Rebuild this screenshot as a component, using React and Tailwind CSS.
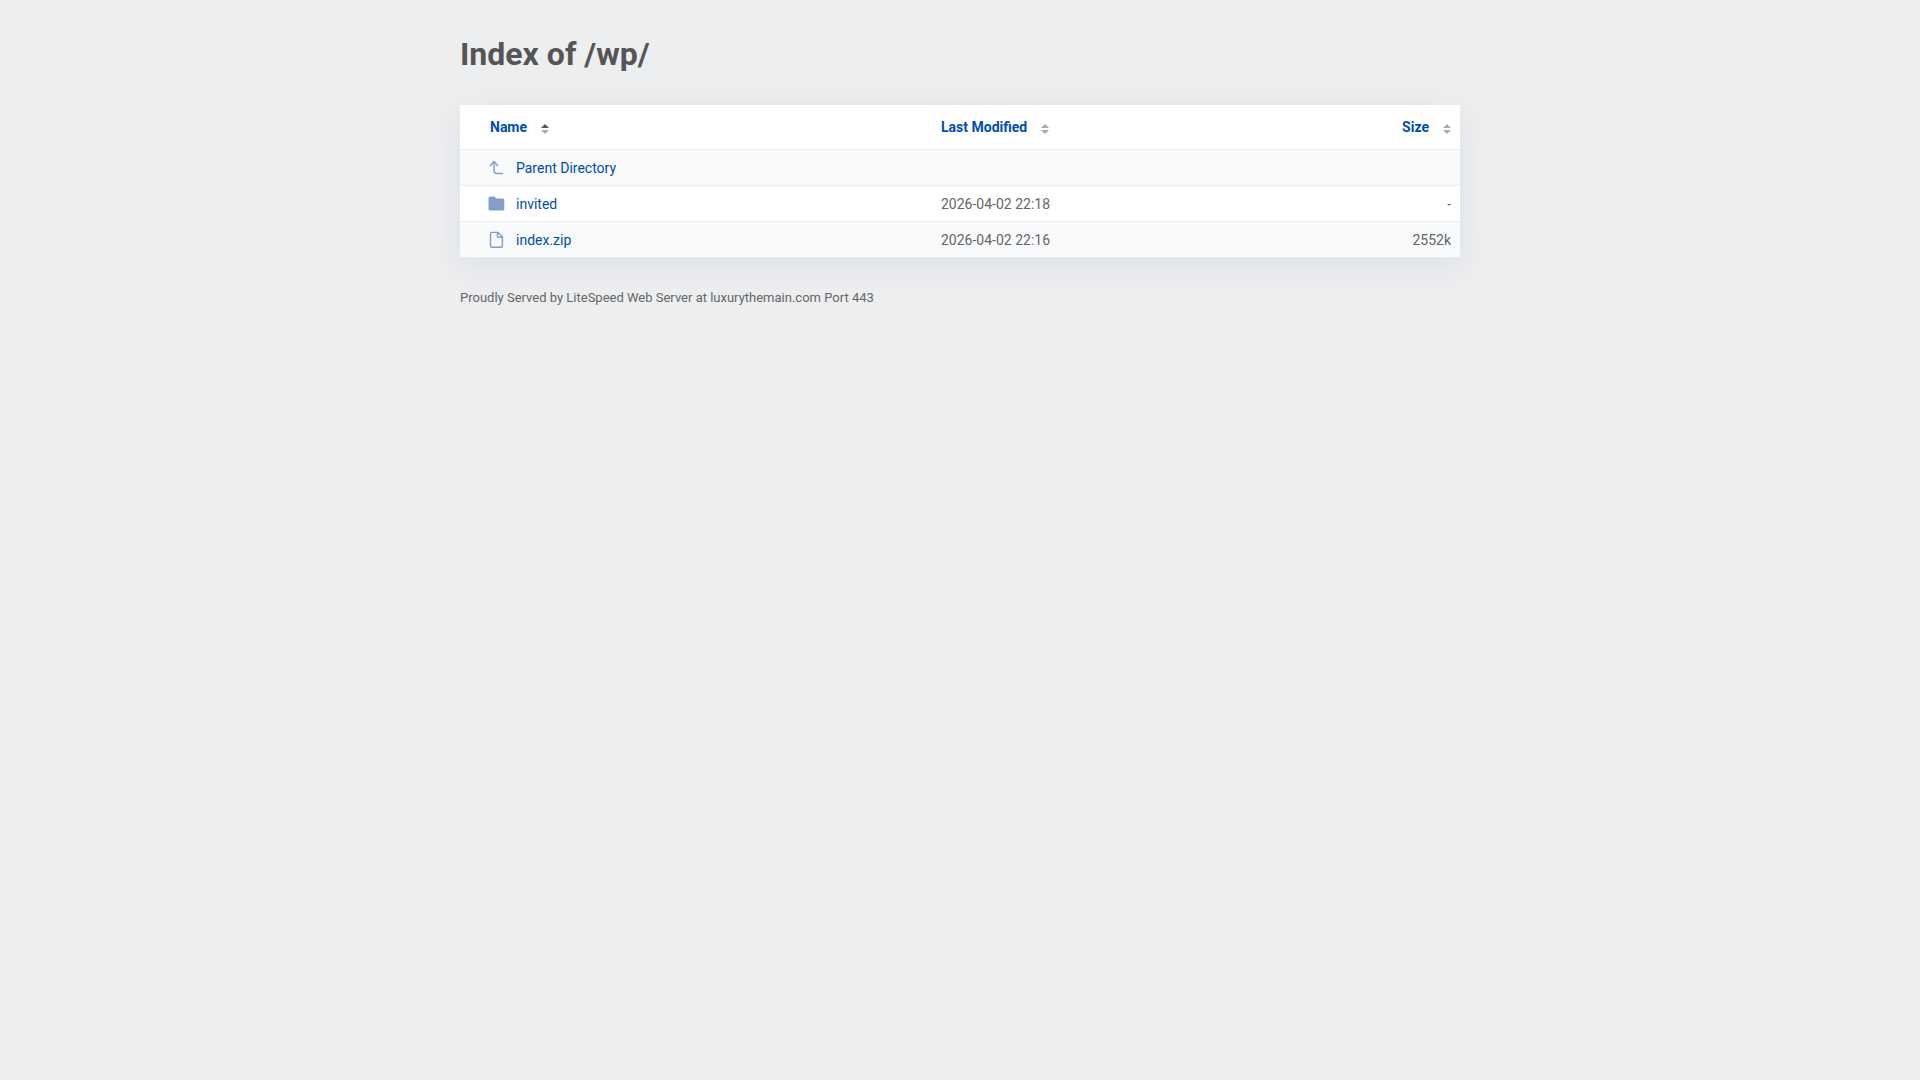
import React, { useState } from 'react';
import clsx from 'clsx';

const entries = [
    { name: 'invited', type: 'folder', modified: '2026-04-02 22:18', size: '-' },
    { name: 'index.zip', type: 'file', modified: '2026-04-02 22:16', size: '2552k' },
];

const ParentIcon = () => (
    <svg width="18" height="18" viewBox="0 0 18 18" fill="none" stroke="#839fc8" strokeWidth="1.5" strokeLinecap="round" strokeLinejoin="round" className="shrink-0">
        <path d="M2.5 6.5L6 2.5L9.5 6.5" />
        <path d="M6 3V11.5Q6 14.5 9 14.5H14.5" />
    </svg>
);

const FolderIcon = () => (
    <svg width="18" height="18" viewBox="0 0 18 18" fill="#839fc8" className="shrink-0">
        <path d="M2.3 1.6H6.2Q7 1.6 7.5 2.4L8.2 3.5H14.7Q16.3 3.5 16.3 5.1V13.9Q16.3 15.5 14.7 15.5H2.1Q0.5 15.5 0.5 13.9V3.4Q0.5 1.6 2.3 1.6Z" />
    </svg>
);

const FileIcon = () => (
    <svg width="18" height="18" viewBox="0 0 18 18" fill="none" stroke="#839fc8" strokeWidth="1.4" strokeLinejoin="round" className="shrink-0">
        <path d="M4 1.4H10L14.4 5.8V14.8Q14.4 16.3 12.9 16.3H4Q2.5 16.3 2.5 14.8V2.9Q2.5 1.4 4 1.4Z" />
        <path d="M9.5 1.6V6.3H14.2" />
    </svg>
);

const SortIcon = ({ direction }) => (
    <svg width="8" height="10" viewBox="0 0 8 10" className="mt-1">
        <path d="M0 4L4 0L8 4Z" fill={direction === 'asc' ? '#555555' : '#aaaaaa'} />
        <path d="M0 6L4 10L8 6Z" fill={direction === 'desc' ? '#555555' : '#aaaaaa'} />
    </svg>
);

const HeaderLink = ({ label, column, sort, onSort, className }) => (
    <a
        href="#"
        onClick={(e) => {
            e.preventDefault();
            onSort(column);
        }}
        className={clsx('flex items-center gap-3.5 font-bold', className)}
    >
        {label}
        <SortIcon direction={sort.column === column ? sort.direction : null} />
    </a>
);

const App = () => {
    const [sort, setSort] = useState({ column: 'name', direction: 'asc' });

    const handleSort = (column) => {
        setSort((prev) => ({
            column,
            direction: prev.column === column && prev.direction === 'asc' ? 'desc' : 'asc',
        }));
    };

    // Folders always stay above files
    const rows = [...entries].sort((a, b) => {
        if (a.type !== b.type) return a.type === 'folder' ? -1 : 1;
        const order = a[sort.column].localeCompare(b[sort.column]);
        return sort.direction === 'asc' ? order : -order;
    });

    return (
        <div className="min-h-screen bg-[#edeef0] px-5 py-8 font-[Roboto,sans-serif] text-sm text-[#555555]">
            <div className="mx-auto max-w-[1000px]">
                <h1 className="mb-7 text-[32px] leading-[45px] font-bold">Index of /wp/</h1>

                <table className="w-full table-fixed border-separate border-spacing-0 bg-white shadow-[0_8px_28px_rgba(154,174,181,0.2)]">
                    <thead>
                        <tr className="h-[45px] text-[#004db3] *:border-b *:border-[#e9ebec]">
                            <th className="w-[47%] pl-[30px]">
                                <HeaderLink label="Name" column="name" sort={sort} onSort={handleSort} />
                            </th>
                            <th className="pl-[11px]">
                                <HeaderLink label="Last Modified" column="modified" sort={sort} onSort={handleSort} />
                            </th>
                            <th className="w-[20%] pr-[9px]">
                                <HeaderLink label="Size" column="size" sort={sort} onSort={handleSort} className="justify-end" />
                            </th>
                        </tr>
                    </thead>
                    <tbody>
                        <tr className="h-9 bg-[#f9fafc] *:border-b *:border-[#e9ebec]">
                            <td className="pl-7">
                                <a href="#" className="flex items-center gap-2.5 text-[#004db3]">
                                    <ParentIcon />
                                    Parent Directory
                                </a>
                            </td>
                            <td></td>
                            <td></td>
                        </tr>
                        {rows.map((row) => (
                            <tr key={row.name} className="h-9 *:border-b *:border-[#e9ebec] even:bg-white odd:bg-[#f9fafc]">
                                <td className="pl-7">
                                    <a href="#" className="flex items-center gap-2.5 text-[#004db3]">
                                        {row.type === 'folder' ? <FolderIcon /> : <FileIcon />}
                                        {row.name}
                                    </a>
                                </td>
                                <td className="pl-[11px] text-[#666666]">{row.modified}</td>
                                <td className="pr-[9px] text-right text-[#666666]">{row.size}</td>
                            </tr>
                        ))}
                    </tbody>
                </table>

                <div className="mt-8 text-[13px] leading-4 text-[#666666]">
                    Proudly Served by LiteSpeed Web Server at luxurythemain.com Port 443
                </div>
            </div>
        </div>
    );
};

export default App;
